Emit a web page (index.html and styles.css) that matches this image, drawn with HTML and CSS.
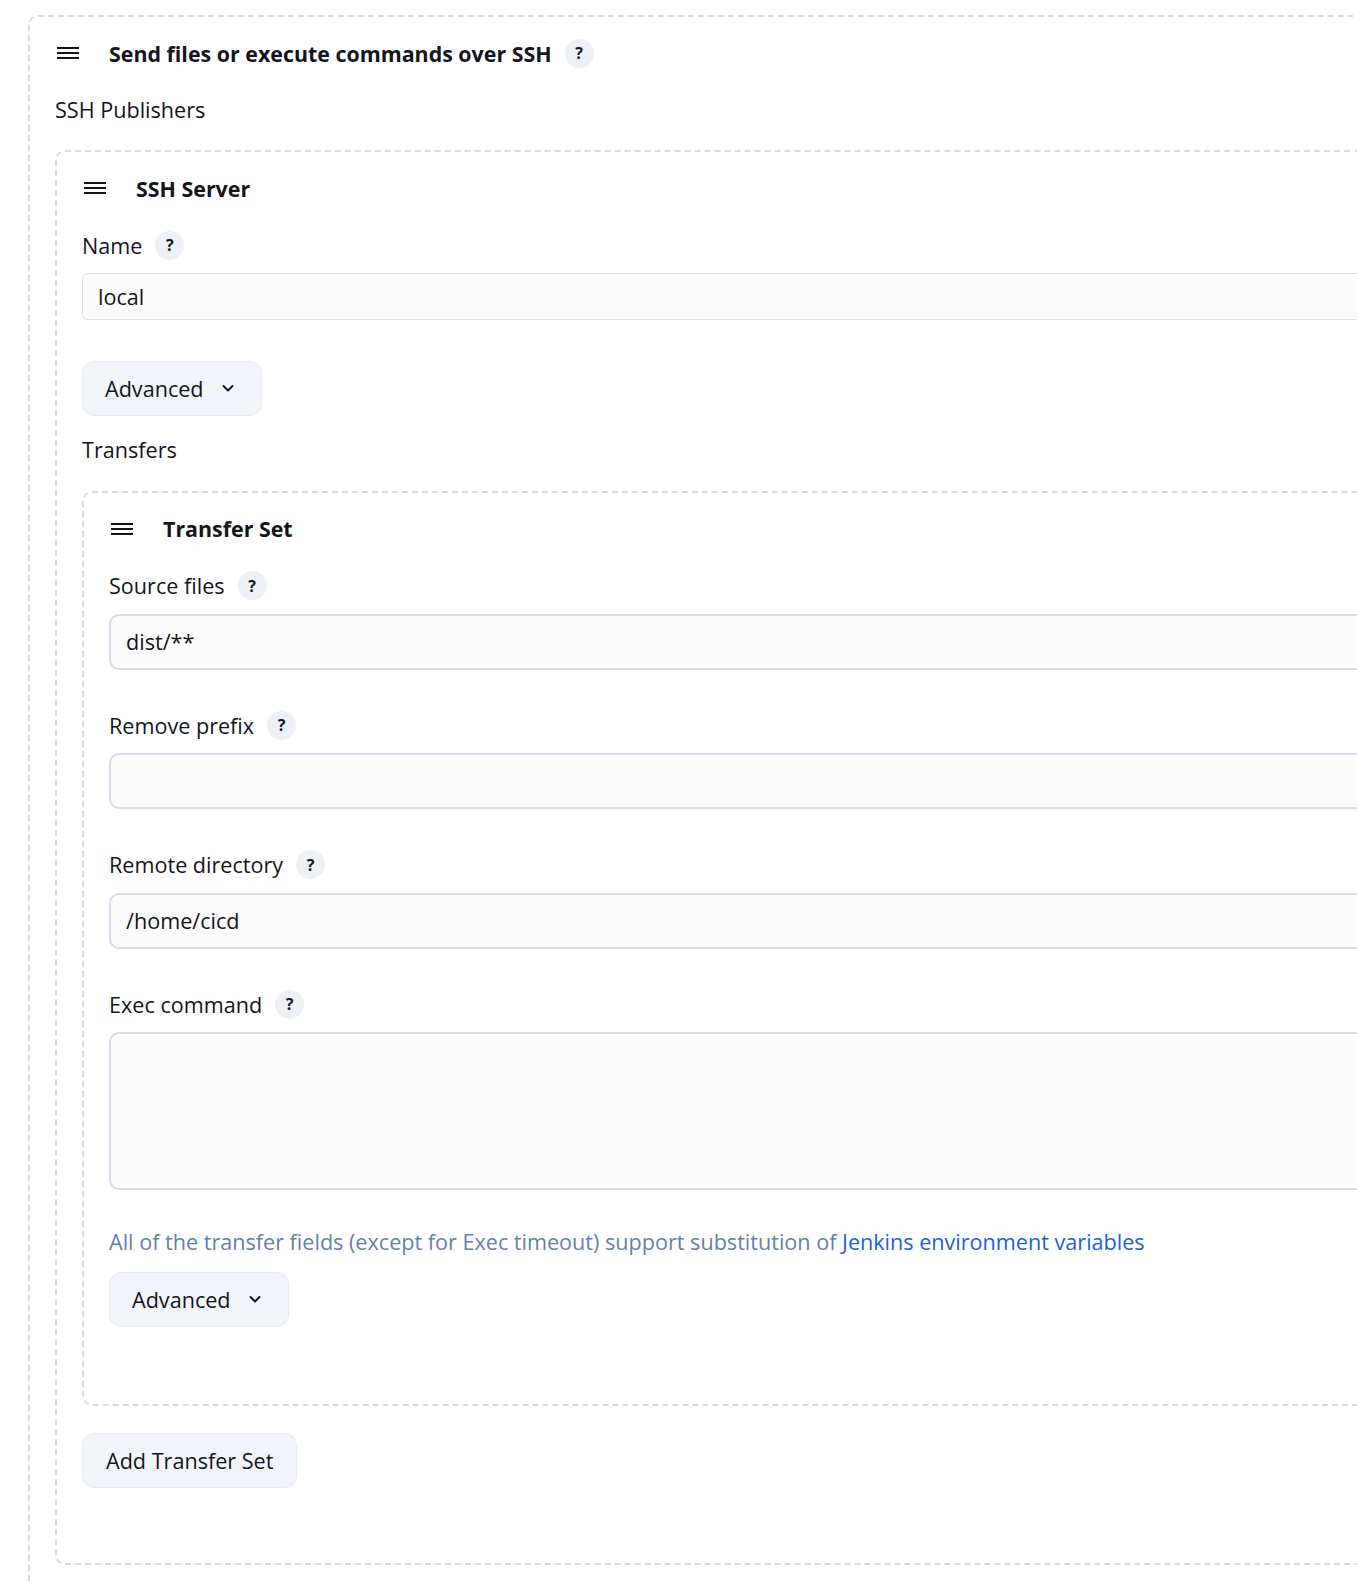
FILE: index.html
```html
<!DOCTYPE html>
<html lang="en">

<head>
    <meta charset="UTF-8">
    <meta name="viewport" content="width=device-width, initial-scale=1.0">
    <title>SSH Publishers</title>

    <link rel="stylesheet" href="styles.css">
</head>

<body>
    <div class="repeated outer">
        <div class="repeated_head">
            <svg class="handle" width="26" height="26" viewBox="0 0 26 26">
                <path d="M2 8h22M2 13h22M2 18h22" stroke="#14141f" stroke-width="2" fill="none" />
            </svg>
            <span class="head_title">Send files or execute commands over SSH</span>
            <span class="help">?</span>
        </div>
        <div class="plain_label">SSH Publishers</div>

        <div class="repeated server">
            <div class="repeated_head">
                <svg class="handle" width="26" height="26" viewBox="0 0 26 26">
                    <path d="M2 8h22M2 13h22M2 18h22" stroke="#14141f" stroke-width="2" fill="none" />
                </svg>
                <span class="head_title">SSH Server</span>
            </div>

            <div class="field">
                <div class="field_label">Name <span class="help">?</span></div>
                <div class="select_box">local</div>
            </div>

            <button class="btn btn_advanced">Advanced
                <svg width="14" height="14" viewBox="0 0 14 14">
                    <path d="M2.5 5l4.5 4.5L11.5 5" stroke="#14141f" stroke-width="1.9" fill="none" stroke-linecap="round" stroke-linejoin="round" />
                </svg>
            </button>

            <div class="plain_label transfers_label">Transfers</div>

            <div class="repeated transfer">
                <div class="repeated_head">
                    <svg class="handle" width="26" height="26" viewBox="0 0 26 26">
                        <path d="M2 8h22M2 13h22M2 18h22" stroke="#14141f" stroke-width="2" fill="none" />
                    </svg>
                    <span class="head_title">Transfer Set</span>
                </div>

                <div class="field">
                    <div class="field_label">Source files <span class="help">?</span></div>
                    <input class="text_input" type="text" value="dist/**">
                </div>
                <div class="field">
                    <div class="field_label">Remove prefix <span class="help">?</span></div>
                    <input class="text_input" type="text" value="">
                </div>
                <div class="field">
                    <div class="field_label">Remote directory <span class="help">?</span></div>
                    <input class="text_input" type="text" value="/home/cicd">
                </div>
                <div class="field field_last">
                    <div class="field_label">Exec command <span class="help">?</span></div>
                    <textarea class="text_area"></textarea>
                </div>

                <div class="hint">All of the transfer fields (except for Exec timeout) support substitution of <a href="#">Jenkins environment variables</a></div>

                <button class="btn btn_advanced">Advanced
                    <svg width="14" height="14" viewBox="0 0 14 14">
                        <path d="M2.5 5l4.5 4.5L11.5 5" stroke="#14141f" stroke-width="1.9" fill="none" stroke-linecap="round" stroke-linejoin="round" />
                    </svg>
                </button>
            </div>

            <button class="btn btn_add">Add Transfer Set</button>
        </div>
    </div>
</body>

</html>
```

FILE: styles.css
```css
body {
    margin: 0;
    padding: 15px 0 0 28px;
    overflow: hidden;
    font-family: "Open Sans", "Noto Sans", sans-serif;
    font-size: 21.6px;
    color: #14141f;
    background-color: white;
}

.repeated {
    border: 2px dashed #d3dbe6;
    border-radius: 10px;
    padding: 16px 0 75px 25px;
}

.outer {
    width: 1500px;
}

.transfer {
    margin-top: 26px;
    padding-bottom: 77px;
}

.repeated_head {
    display: flex;
    align-items: center;
    height: 40px;
    margin-bottom: 22px;
}

.handle {
    margin-right: 28px;
}

.head_title {
    font-weight: 700;
    font-size: 21.4px;
}

.help {
    display: inline-flex;
    align-items: center;
    justify-content: center;
    width: 29px;
    height: 29px;
    margin-left: 13px;
    border-radius: 50%;
    background-color: #edf1f6;
    font-size: 16px;
    font-weight: 700;
}

.plain_label {
    height: 30px;
    line-height: 30px;
    margin-bottom: 25px;
}

.transfers_label {
    margin-top: 19px;
    margin-bottom: 0;
}

.field {
    margin-bottom: 40.5px;
}

.field_last {
    margin-bottom: 36.5px;
}

.field_label {
    display: flex;
    align-items: center;
    height: 30px;
    margin-bottom: 13px;
}

.select_box {
    box-sizing: border-box;
    height: 47px;
    line-height: 45px;
    padding-left: 15px;
    border: 1px solid #dde1ea;
    border-radius: 5px;
    background-color: #fcfcfc;
}

.text_input,
.text_area {
    display: block;
    box-sizing: border-box;
    width: 100%;
    height: 56px;
    padding: 0 15px;
    border: 2px solid #d6dbe8;
    border-radius: 10px;
    background-color: #fcfcfc;
    font-family: inherit;
    font-size: 21.6px;
    color: #14141f;
}

.text_area {
    height: 158px;
    resize: none;
}

.hint {
    height: 30px;
    line-height: 30px;
    margin-bottom: 15px;
    color: #6381b0;
    white-space: nowrap;
}

.hint a {
    color: #1c61d8;
    text-decoration: none;
}

.btn {
    display: flex;
    align-items: center;
    height: 55px;
    border: 1px solid #e7ebf0;
    border-radius: 12px;
    background-color: #f1f4f8;
    font-family: inherit;
    font-size: 21.6px;
    color: #14141f;
}

.btn_advanced {
    padding: 0 26px 0 22px;
    gap: 17px;
}

.btn_add {
    margin-top: 27px;
    padding: 0 23px;
}
```
